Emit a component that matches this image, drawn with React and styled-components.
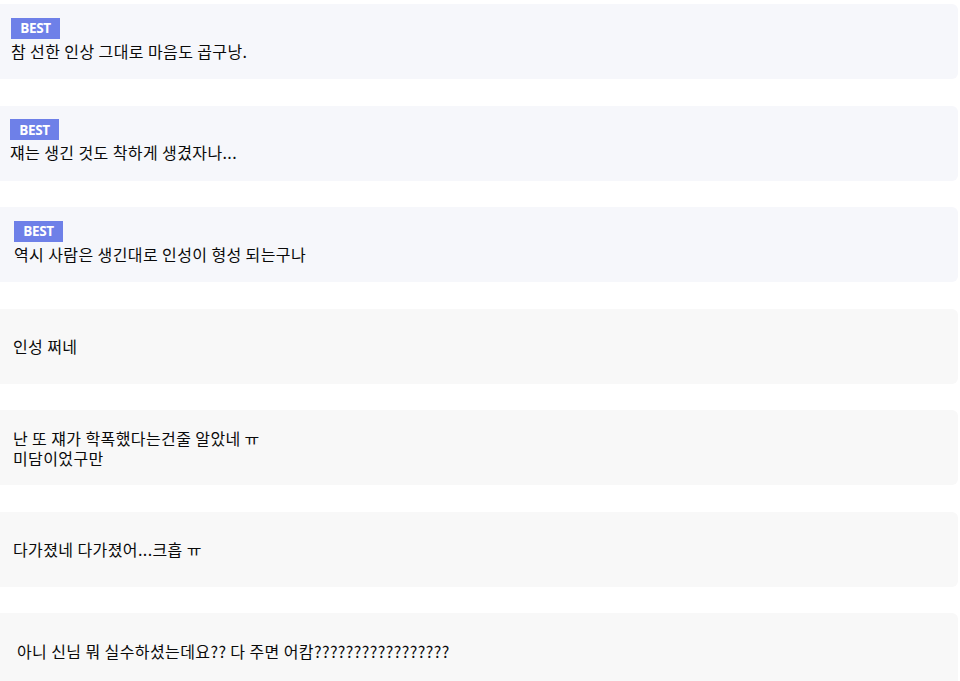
import React from "react";
import styled, { createGlobalStyle } from "styled-components";

const Global = createGlobalStyle`
  html, body { margin: 0; padding: 0; background: #ffffff; }
  body { font-family: "Noto Sans CJK KR", "Noto Sans", sans-serif; color: #1f1f1f; }
`;

const List = styled.div`
  display: flex;
  flex-direction: column;
  gap: 26.5px;
  padding-top: 4px;
  padding-right: 2px;
`;

const Card = styled.div`
  height: 75px;
  box-sizing: border-box;
  display: flex;
  flex-direction: column;
  justify-content: center;
  align-items: flex-start;
  padding-left: ${(p) => p.$indent}px;
  padding-bottom: ${(p) => (p.$best ? 5 : 0)}px;
  background: ${(p) => (p.$best ? "#f6f7fb" : "#f8f8f8")};
  border-radius: 0 6px 6px 0;
`;

const Badge = styled.span`
  display: inline-flex;
  align-items: center;
  justify-content: center;
  width: 49px;
  height: 21px;
  background: #6e80e8;
  color: #ffffff;
  font-family: "Open Sans", "Noto Sans", sans-serif;
  font-weight: 700;
  font-size: 13.5px;
  letter-spacing: -0.3px;
  margin-bottom: 2px;
`;

const Text = styled.p`
  margin: 0;
  font-size: 16px;
  font-weight: 400;
  line-height: 20px;
  letter-spacing: 0.4px;
  white-space: pre-line;
  color: #0a0a0a;
`;

const comments = [
  { best: true, indent: 11, text: "참 선한 인상 그대로 마음도 곱구낭." },
  { best: true, indent: 10, text: "쟤는 생긴 것도 착하게 생겼자나..." },
  { best: true, indent: 14, text: "역시 사람은 생긴대로 인성이 형성 되는구나" },
  { best: false, indent: 13, text: "인성 쩌네" },
  { best: false, indent: 13, text: "난 또 쟤가 학폭했다는건줄 알았네 ㅠ\n미담이었구만" },
  { best: false, indent: 13, text: "다가졌네 다가졌어...크흡 ㅠ" },
  { best: false, indent: 17, text: "아니 신님 뭐 실수하셨는데요?? 다 주면 어캄?????????????????" },
];

export default function App() {
  return (
    <>
      <Global />
      <List>
        {comments.map((c, i) => (
          <Card key={i} $best={c.best} $indent={c.indent}>
            {c.best && <Badge>BEST</Badge>}
            <Text>{c.text}</Text>
          </Card>
        ))}
      </List>
    </>
  );
}
